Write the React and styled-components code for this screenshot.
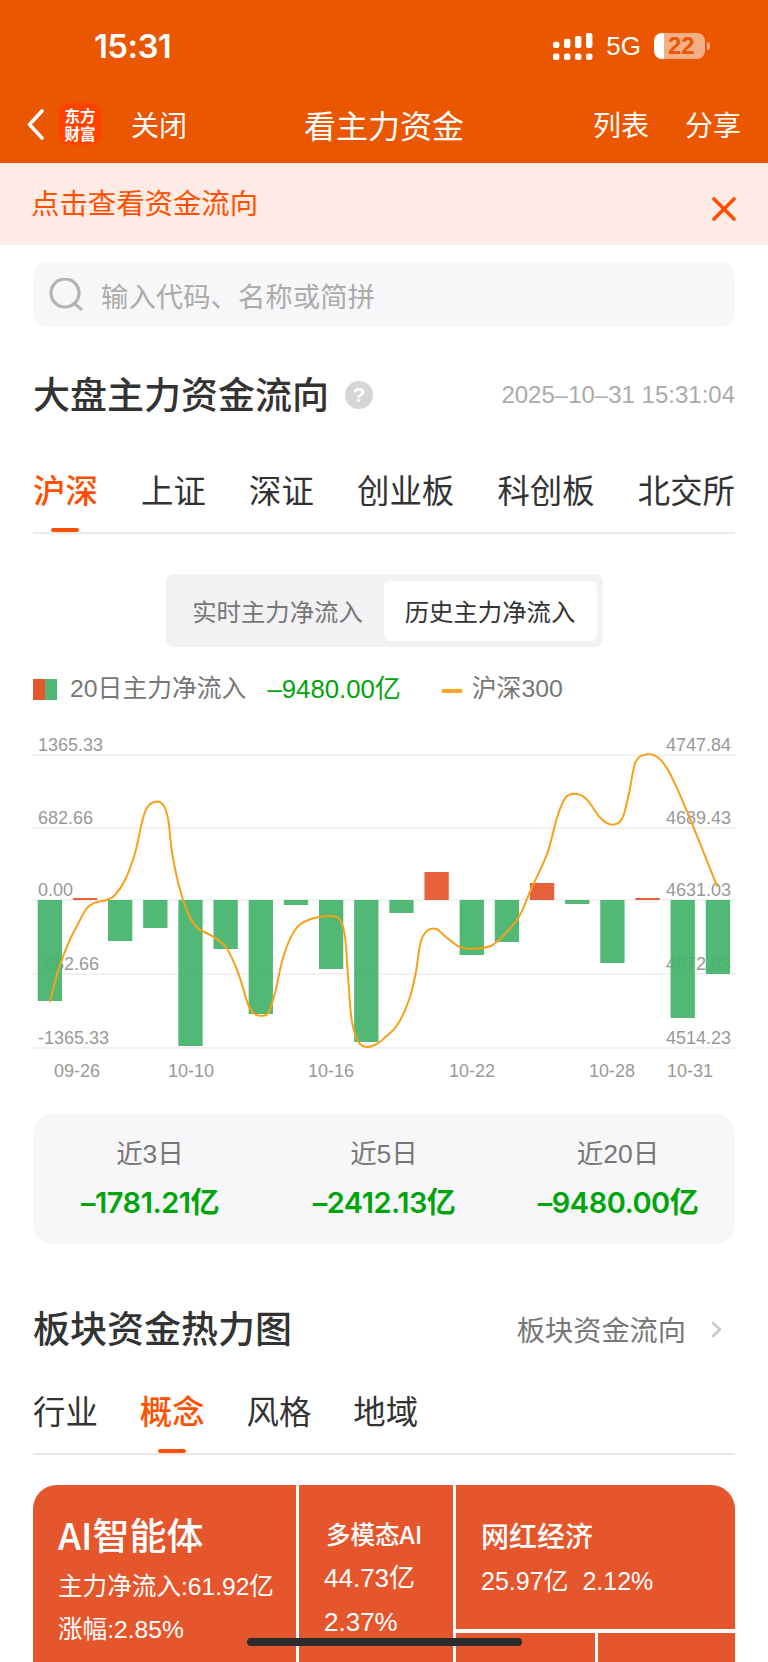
import React from 'react';
import styled, { createGlobalStyle } from 'styled-components';

const FONT = '"Liberation Sans", "Noto Sans CJK SC", sans-serif';
const CJK = '"Noto Sans CJK SC", "Liberation Sans", sans-serif';
const ORANGE = '#EB5600';
const ACCENT = '#FF5000';
const GREEN = '#00A50C';
const RED = '#E5562D';

const GlobalStyle = createGlobalStyle`
  html, body { margin: 0; padding: 0; background: #fff; }
  body { font-family: ${FONT}; }
  * { box-sizing: border-box; }
`;

const Page = styled('div')`
  position: relative;
  width: 768px;
  height: 1662px;
  overflow: hidden;
  background: #fff;
`;

const Header = styled('header')`
  height: 163px;
  background: ${ORANGE};
  color: #fff;
`;

const StatusBar = styled('div')`
  height: 92px;
  display: flex;
  align-items: center;
  justify-content: space-between;
  padding: 0 63px 0 94px;
`;

const Time = styled('div')`
  font: 600 33px/40px Inter, sans-serif;
  letter-spacing: -0.6px;
`;

const StatusRight = styled('div')`
  display: flex;
  align-items: center;
`;

const Net = styled('span')`
  font: 400 26px/30px "Liberation Sans", sans-serif;
  margin: 0 13px 0 13px;
`;

const Battery = styled('div')`
  position: relative;
  width: 51px;
  height: 26px;
  border-radius: 8px;
  background: linear-gradient(90deg, #fff 0 10px, #F5AE85 10px);
  color: ${ORANGE};
  font: 700 24px/26px "Liberation Sans", sans-serif;
  padding-left: 14px;
  &::after {
    content: '';
    position: absolute;
    right: -5px;
    top: 9px;
    width: 3px;
    height: 8px;
    border-radius: 0 3px 3px 0;
    background: #F5AE85;
  }
`;

const NavBar = styled('nav')`
  height: 64px;
  display: grid;
  grid-template-columns: 1fr auto 1fr;
  align-items: center;
  padding: 0 27px;
`;

const NavLeft = styled('div')`
  display: flex;
  align-items: center;
`;

const NavRight = styled('div')`
  display: flex;
  justify-content: flex-end;
  gap: 36px;
`;

const Logo = styled('div')`
  width: 42px;
  height: 42px;
  flex: none;
  margin: 0 30px 0 15px;
  border-radius: 9px;
  background: #FF4200;
  font: 700 15.5px/18px ${CJK};
  text-align: center;
  padding-top: 3px;
`;

const NavText = styled('span')`
  font: 400 28px/40px ${CJK};
`;

const NavTitle = styled('h1')`
  margin: 0;
  font: 400 32px/44px ${CJK};
`;

const Banner = styled('div')`
  height: 82px;
  background: #FFEBE5;
  color: ${ACCENT};
  display: flex;
  justify-content: space-between;
  padding: 20px 32px 0 31px;
  font: 400 28.4px/38px ${CJK};
`;

const CloseIcon = styled('svg')`
  margin-top: 14px;
`;

const Main = styled('main')`
  padding: 17px 33px 0;
`;

const Search = styled('div')`
  height: 65px;
  border-radius: 14px;
  background: #F7F7F9;
  display: flex;
  align-items: center;
  padding-left: 16px;
  gap: 18px;
  color: #ABABAB;
  font: 400 27.4px/38px ${CJK};
`;

const TitleRow = styled('div')`
  height: 50px;
  margin-top: ${props => props.top}px;
  display: flex;
  align-items: center;
  justify-content: space-between;
`;

const TitleGroup = styled('div')`
  display: flex;
  align-items: center;
  gap: 16px;
`;

const Title = styled('h2')`
  margin: 0 0 4px;
  color: #333;
  font: 500 37px/46px ${CJK};
`;

const Help = styled('span')`
  width: 28px;
  height: 28px;
  border-radius: 50%;
  background: #D6D6D6;
  color: #fff;
  font: 700 21px/28px "Liberation Sans", sans-serif;
  text-align: center;
`;

const DateText = styled('span')`
  color: #ABABAB;
  font: 400 24px/30px "Liberation Sans", sans-serif;
`;

const Tabs = styled('div')`
  display: flex;
  margin-top: ${props => props.top}px;
  justify-content: ${props => (props.spread ? 'space-between' : 'flex-start')};
  gap: ${props => (props.spread ? 0 : 42)}px;
  border-bottom: 2px solid #E9E9E9;
`;

const Tab = styled('div')`
  position: relative;
  height: 82px;
  color: ${props => (props.active ? ACCENT : '#333')};
  font: ${props => (props.active ? 500 : 400)} 32.4px/78px ${CJK};
  ${props => props.active && `
    &::after {
      content: '';
      position: absolute;
      left: 50%;
      bottom: 0;
      width: 28px;
      height: 4px;
      margin-left: -14px;
      border-radius: 2px;
      background: ${ACCENT};
    }
  `}
`;

const Segment = styled('div')`
  width: 437px;
  height: 73px;
  margin: 40px auto 0;
  padding: 7px 6px;
  border-radius: 8px;
  background: #F2F2F4;
  display: grid;
  grid-template-columns: 212px 213px;
`;

const SegmentItem = styled('div')`
  border-radius: 6px;
  text-align: center;
  background: ${props => (props.active ? '#fff' : 'transparent')};
  color: ${props => (props.active ? '#333' : '#777')};
  font: 400 24.4px/60px ${CJK};
`;

const Legend = styled('div')`
  height: 26px;
  margin-top: 29px;
  display: flex;
  align-items: center;
  color: #777;
  font: 400 24.8px/26px ${FONT};
`;

const LegendSwatch = styled('span')`
  width: 24px;
  height: 21px;
  margin-right: 13px;
  background: linear-gradient(90deg, ${RED} 50%, #50B874 50%);
`;

const LegendValue = styled('span')`
  color: ${GREEN};
  font-size: 25.8px;
  margin: 0 41px 0 21px;
`;

const LegendLine = styled('span')`
  width: 20px;
  height: 4px;
  margin: 3px 10px 0 0;
  background: #F9A825;
`;

const Chart = styled('svg')`
  display: block;
  margin: 0 -33px;
`;

const Stats = styled('div')`
  height: 130px;
  margin-top: 14px;
  padding-top: 22px;
  border-radius: 20px;
  background: #F7F7F9;
  display: grid;
  grid-template-columns: repeat(3, 1fr);
  text-align: center;
`;

const StatLabel = styled('div')`
  color: #777;
  font: 400 26.5px/36px ${FONT};
`;

const StatValue = styled('div')`
  margin-top: 11px;
  color: ${GREEN};
  font: 600 29px/40px Inter, "Noto Sans CJK SC", sans-serif;
  letter-spacing: -0.5px;
`;

const SectionLink = styled('div')`
  display: flex;
  align-items: center;
  gap: 25px;
  padding-right: 13px;
  color: #777;
  font: 400 28.2px/40px ${CJK};
`;

const Treemap = styled('div')`
  height: 260px;
  margin-top: 30px;
  border-radius: 24px 24px 0 0;
  overflow: hidden;
  display: grid;
  grid-template-columns: 262.5px 153.5px 1fr;
  column-gap: 3.5px;
  color: #fff;
`;

const Cell = styled('div')`
  background: ${RED};
  padding: ${props => props.top || 0}px 0 0 ${props => props.left || 0}px;
`;

const CellStack = styled('div')`
  display: grid;
  grid-template-rows: 144px 1fr;
  row-gap: 3.5px;
`;

const CellRow = styled('div')`
  display: grid;
  grid-template-columns: 138.5px 1fr;
  column-gap: 3.5px;
`;

const CellName = styled('div')`
  font: 500 ${props => props.size}px/${props => props.line}px ${CJK};
  margin-left: ${props => props.shift || 0}px;
`;

const CellLine = styled('div')`
  font: 400 ${props => props.size}px/${props => props.line}px ${FONT};
  margin-top: ${props => props.top || 0}px;
  white-space: pre;
`;

const HomeBar = styled('div')`
  position: absolute;
  left: 247px;
  top: 1638px;
  width: 275px;
  height: 8px;
  border-radius: 4px;
  background: #2B2B2B;
`;

// bar heights in px from the zero line, positive goes up
const BARS = [-101, 2, -41, -28, -146, -49, -114, -5, -69, -142, -13, 28, -55, -42, 17, -4, -63, 2, -118, -74];
const GRID_Y = [755, 828, 900, 974, 1048];
const LEFT_LABELS = ['1365.33', '682.66', '0.00', '-682.66', '-1365.33'];
const RIGHT_LABELS = ['4747.84', '4689.43', '4631.03', '4572.63', '4514.23'];
const DATES = [['09-26', 77], ['10-10', 191], ['10-16', 331], ['10-22', 472], ['10-28', 612], ['10-31', 690]];

// hs300 curve read off the screenshot
const CURVE = [
  [50, 1002], [58.3, 970], [68.3, 943.3], [78.3, 923.3], [86.7, 908.3], [95, 902.7], [106.7, 900], [115, 895],
  [125, 880], [135, 853.3], [141.7, 823.3], [146.7, 808.3], [155, 801.7], [163.3, 805], [168.3, 820], [171.7, 850],
  [178.3, 883.3], [186.7, 910], [196.7, 927.3], [213.3, 936.7], [226.7, 948.3], [238.3, 973.3], [248.3, 1005],
  [255, 1014], [261.7, 1015.7], [268.3, 1012.7], [275, 993.3], [283.3, 956.7], [295, 930], [308.3, 920], [330, 916],
  [340, 920], [345, 936.7], [348.3, 980], [351.7, 1020], [358.3, 1041.7], [366.7, 1047], [376.7, 1044], [384, 1038.3],
  [397.3, 1025], [409, 1000], [415.7, 973.3], [420.7, 941.7], [427.3, 930.7], [436.3, 929], [445.7, 936.7],
  [459, 946.7], [472, 948.7], [490.7, 946], [504, 935], [519, 916.7], [530.7, 890], [547.3, 853.3], [557.3, 816.7],
  [565.7, 797.3], [577.3, 794], [587.3, 800], [600.7, 818.3], [612.3, 824.7], [622.3, 818.3], [629, 793.3],
  [635.7, 761.7], [647.3, 754.3], [659, 758.3], [670.7, 775], [685.7, 808.3], [700.7, 845], [717.3, 886.7],
];

const curvePath = (pts) => {
  let d = `M${pts[0][0]} ${pts[0][1]}`;
  for (let i = 0; i < pts.length - 1; i += 1) {
    const p0 = pts[Math.max(i - 1, 0)];
    const p1 = pts[i];
    const p2 = pts[i + 1];
    const p3 = pts[Math.min(i + 2, pts.length - 1)];
    const c1 = [p1[0] + (p2[0] - p0[0]) / 6, p1[1] + (p2[1] - p0[1]) / 6];
    const c2 = [p2[0] - (p3[0] - p1[0]) / 6, p2[1] - (p3[1] - p1[1]) / 6];
    d += ` C${c1[0]} ${c1[1]} ${c2[0]} ${c2[1]} ${p2[0]} ${p2[1]}`;
  }
  return d;
};

const barX = (i) => 37.7 + 35.16 * i;

const SignalIcon = () => (
  <svg width="40" height="27" viewBox="0 0 40 27" fill="#fff">
    <rect x="0" y="8.7" width="6.4" height="6.4" rx="2" />
    <rect x="11" y="5.7" width="6.4" height="9.4" rx="2" />
    <rect x="22" y="3" width="6.4" height="12.1" rx="2" />
    <rect x="33" y="0" width="6.4" height="15.1" rx="2" />
    <rect x="0" y="20.5" width="6.4" height="6.4" rx="2" />
    <rect x="11" y="20.5" width="6.4" height="6.4" rx="2" />
    <rect x="22" y="20.5" width="6.4" height="6.4" rx="2" />
    <rect x="33" y="20.5" width="6.4" height="6.4" rx="2" />
  </svg>
);

const App = () => (
  <Page>
    <GlobalStyle />
    <Header>
      <StatusBar>
        <Time>15:31</Time>
        <StatusRight>
          <SignalIcon />
          <Net>5G</Net>
          <Battery>22</Battery>
        </StatusRight>
      </StatusBar>
      <NavBar>
        <NavLeft>
          <svg width="17" height="31" viewBox="0 0 17 31" fill="none" stroke="#fff" strokeWidth="3.6" strokeLinecap="round" strokeLinejoin="round">
            <path d="M15 2 L2.5 15.5 L15 29" />
          </svg>
          <Logo>东方<br />财富</Logo>
          <NavText>关闭</NavText>
        </NavLeft>
        <NavTitle>看主力资金</NavTitle>
        <NavRight>
          <NavText>列表</NavText>
          <NavText>分享</NavText>
        </NavRight>
      </NavBar>
    </Header>
    <Banner>
      <span>点击查看资金流向</span>
      <CloseIcon width="24" height="24" viewBox="0 0 24 24" stroke={ACCENT} strokeWidth="3.6" strokeLinecap="round">
        <path d="M2 2 L22 22 M22 2 L2 22" />
      </CloseIcon>
    </Banner>
    <Main>
      <Search>
        <svg width="34" height="33" viewBox="0 0 34 33" fill="none" stroke="#B4B4B4" strokeWidth="3.2" strokeLinecap="round">
          <circle cx="16" cy="15" r="14" />
          <path d="M26 26 L32 31" />
        </svg>
        <span>输入代码、名称或简拼</span>
      </Search>
      <TitleRow top={43}>
        <TitleGroup>
          <Title>大盘主力资金流向</Title>
          <Help>?</Help>
        </TitleGroup>
        <DateText>2025–10–31 15:31:04</DateText>
      </TitleRow>
      <Tabs spread top={30}>
        {['沪深', '上证', '深证', '创业板', '科创板', '北交所'].map((t, i) => (
          <Tab key={t} active={i === 0}>{t}</Tab>
        ))}
      </Tabs>
      <Segment>
        <SegmentItem>实时主力净流入</SegmentItem>
        <SegmentItem active>历史主力净流入</SegmentItem>
      </Segment>
      <Legend>
        <LegendSwatch />
        <span>20日主力净流入</span>
        <LegendValue>–9480.00亿</LegendValue>
        <LegendLine />
        <span>沪深300</span>
      </Legend>
      <Chart width="768" height="398" viewBox="0 702 768 398" fontFamily="Liberation Sans, sans-serif" fontSize="18" fill="#999">
        {GRID_Y.map((y) => (
          <line key={y} x1="32" x2="736" y1={y} y2={y} stroke="#EEEEEE" strokeWidth="1.5" />
        ))}
        {LEFT_LABELS.map((t, i) => (
          <text key={t} x="38" y={GRID_Y[i] - 4.5}>{t}</text>
        ))}
        {RIGHT_LABELS.map((t, i) => (
          <text key={t} x="731" y={GRID_Y[i] - 4.5} textAnchor="end">{t}</text>
        ))}
        {BARS.map((v, i) => (
          <rect
            key={i}
            x={barX(i)}
            y={v > 0 ? 900 - v : 900}
            width="24.3"
            height={Math.abs(v)}
            fill={v > 0 ? RED : '#44B36B'}
            fillOpacity="0.93"
          />
        ))}
        <path d={curvePath(CURVE)} fill="none" stroke="#F7A11A" strokeWidth="2" />
        {DATES.map(([t, x]) => (
          <text key={t} x={x} y="1076.5" textAnchor="middle">{t}</text>
        ))}
      </Chart>
      <Stats>
        <div>
          <StatLabel>近3日</StatLabel>
          <StatValue>–1781.21亿</StatValue>
        </div>
        <div>
          <StatLabel>近5日</StatLabel>
          <StatValue>–2412.13亿</StatValue>
        </div>
        <div>
          <StatLabel>近20日</StatLabel>
          <StatValue>–9480.00亿</StatValue>
        </div>
      </Stats>
      <TitleRow top={60}>
        <Title>板块资金热力图</Title>
        <SectionLink>
          <span>板块资金流向</span>
          <svg width="11" height="17" viewBox="0 0 11 17" fill="none" stroke="#C8C8C8" strokeWidth="2.4" strokeLinecap="round" strokeLinejoin="round">
            <path d="M2 2 L9 8.5 L2 15" />
          </svg>
        </SectionLink>
      </TitleRow>
      <Tabs top={17}>
        {['行业', '概念', '风格', '地域'].map((t, i) => (
          <Tab key={t} active={i === 1}>{t}</Tab>
        ))}
      </Tabs>
      <Treemap>
        <Cell top={24} left={25}>
          <CellName size={37} line={50}>AI智能体</CellName>
          <CellLine size={24.6} line={43} top={6}>主力净流入:61.92亿</CellLine>
          <CellLine size={24.6} line={43}>涨幅:2.85%</CellLine>
        </Cell>
        <Cell top={29} left={25}>
          <CellName size={24.5} line={40} shift={2}>多模态AI</CellName>
          <CellLine size={26} line={44} top={2}>44.73亿</CellLine>
          <CellLine size={26} line={44}>2.37%</CellLine>
        </Cell>
        <CellStack>
          <Cell top={30} left={25}>
            <CellName size={28} line={40}>网红经济</CellName>
            <CellLine size={25} line={40} top={6}>25.97亿  2.12%</CellLine>
          </Cell>
          <CellRow>
            <Cell />
            <Cell />
          </CellRow>
        </CellStack>
      </Treemap>
    </Main>
    <HomeBar />
  </Page>
);

export default App;
